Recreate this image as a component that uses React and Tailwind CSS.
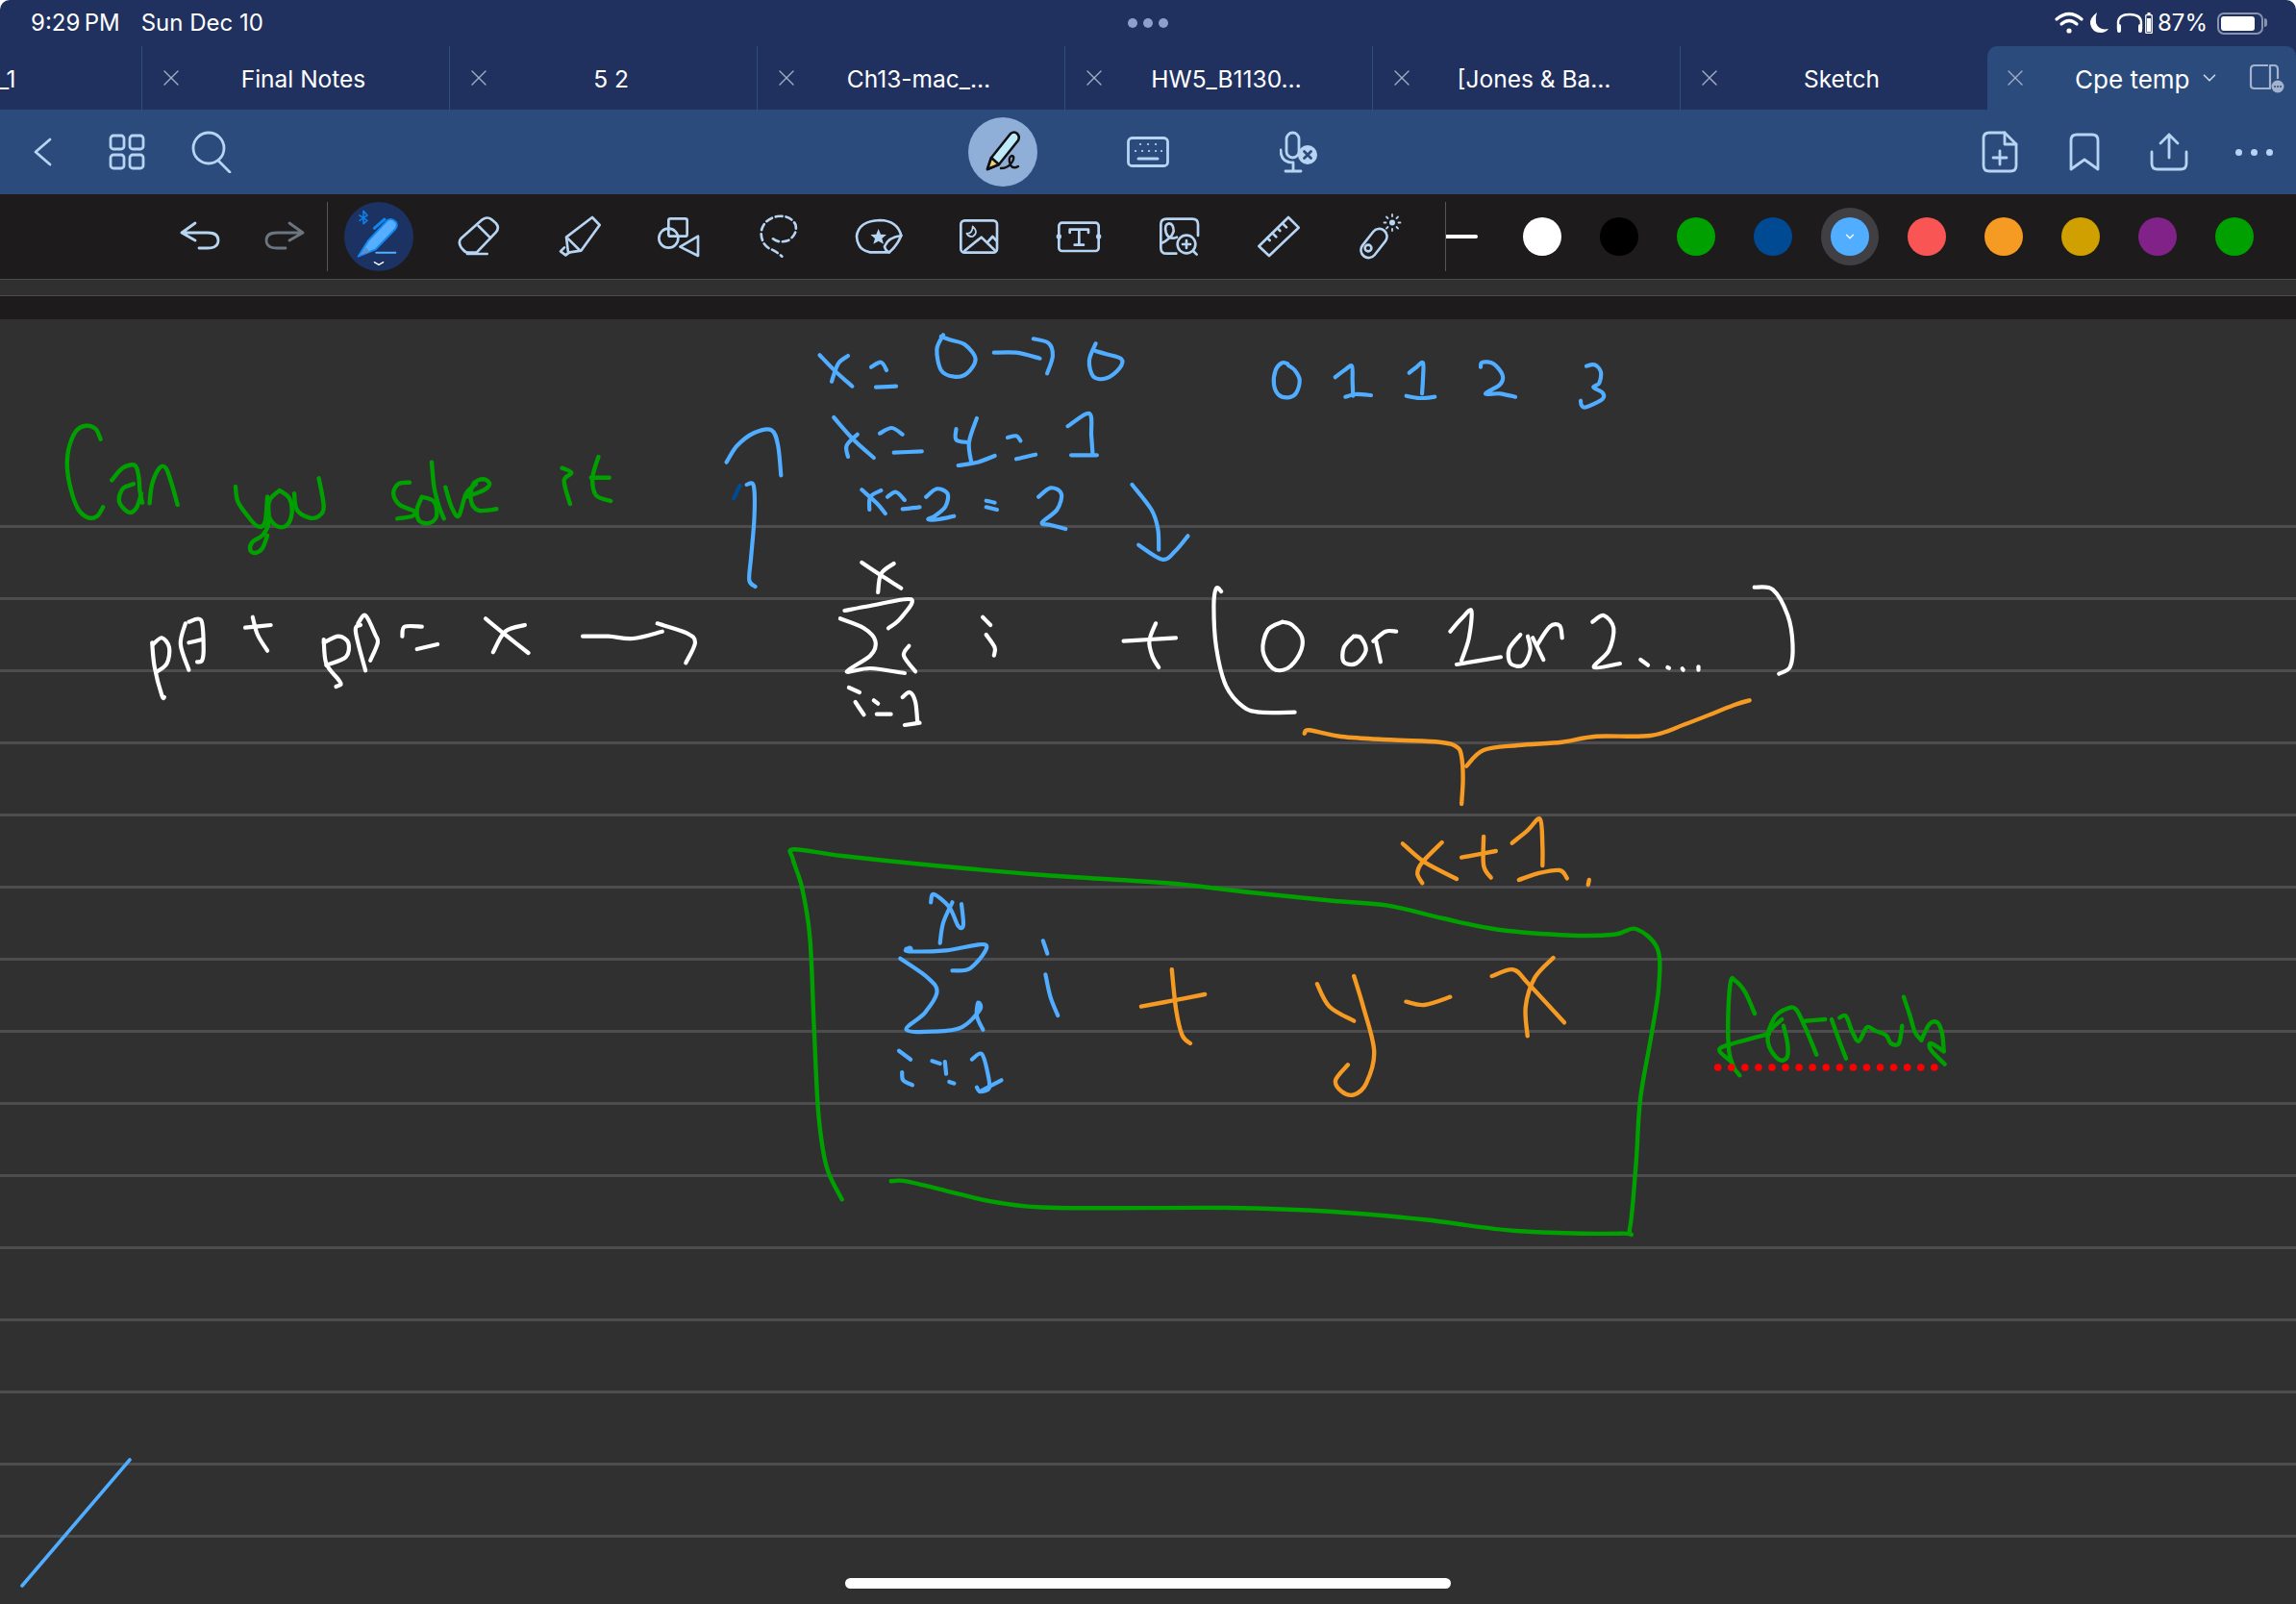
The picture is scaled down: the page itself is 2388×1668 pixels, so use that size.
import { X, ChevronDown } from 'lucide-react';

const ICON = '#b7d4f3';

// ---- handwriting on the page, traced stroke by stroke ----
const GREEN = '#00a000';
const BLUE = '#51adff';
const WHITE = '#ffffff';
const ORANGE = '#f59a23';

// each frame maps traced coordinates to page pixels: [x0, y0, sx, sy]
const INK = [
  {
    frame: [0, 340, 1 / 1.96, 1 / 3],
    strokes: [
      [GREEN, '205,350 195,318 175,308 155,325 140,380 137,440 145,510 160,570 180,595 198,590 210,562'],
      [GREEN, '228,478 250,440 275,432 283,470 285,510 290,548'],
      [GREEN, '272,490 250,505 243,545 262,578 278,565 288,520'],
      [GREEN, '305,550 310,490 325,440 338,440 350,490 362,555'],
      [GREEN, '480,498 485,545 505,590 525,622 540,610 545,530'],
      [GREEN, '545,530 548,610 535,650 515,670 510,695 520,705 535,690 545,650'],
      [GREEN, '570,510 550,540 548,590 565,622 585,618 595,580 590,535 570,510'],
      [GREEN, '600,520 605,570 630,595 650,590 660,560 650,472'],
      [GREEN, '835,485 812,490 802,520 815,555 845,575 840,590 810,598'],
      [GREEN, '860,530 850,570 855,605 875,612 890,590 885,545 860,530'],
      [GREEN, '880,422 885,500 895,560 905,598'],
      [GREEN, '908,500 920,560 935,590 950,520 970,490'],
      [GREEN, '950,530 985,510 998,490 985,475 965,490 960,540 975,572 1012,568'],
      [GREEN, '1146,440 1165,455 1150,480 1162,552'],
      [GREEN, '1220,405 1208,470 1215,525 1245,543'],
      [GREEN, '1205,470 1242,470'],
      [WHITE, '310,985 315,1060 330,1150 335,1155'],
      [WHITE, '312,990 330,970 345,1000 340,1050 318,1078'],
      [WHITE, '378,925 368,990 385,1070'],
      [WHITE, '385,920 410,915 415,1000 412,1040 402,1045'],
      [WHITE, '385,985 412,975'],
      [WHITE, '515,905 525,960 545,1010'],
      [WHITE, '500,938 552,930'],
      [WHITE, '660,975 665,1050 690,1100 695,1115 685,1122'],
      [WHITE, '660,985 690,965 710,985 705,1030 665,1055'],
      [WHITE, '735,930 725,950 745,1072'],
      [WHITE, '730,925 745,900 765,960 770,985 755,1040'],
      [WHITE, '820,965 825,935 860,935'],
      [WHITE, '850,1005 892,990'],
      [WHITE, '990,910 1030,960 1077,1017'],
      [WHITE, '1070,930 1030,950 1005,1015'],
      [WHITE, '1188,965 1240,965 1290,972 1350,950'],
      [WHITE, '1340,925 1400,955 1417,985 1398,1048'],
    ],
  },
  {
    frame: [740, 320, 1 / 2.24, 1 / 3],
    strokes: [
      [BLUE, '252,148 290,200 328,245'],
      [BLUE, '318,150 295,175 280,230'],
      [BLUE, '372,185 395,170 408,195'],
      [BLUE, '383,248 430,245'],
      [BLUE, '540,85 525,130 535,195 565,215 595,205 615,160 590,115 555,100 535,90'],
      [BLUE, '658,140 710,140 765,158'],
      [BLUE, '750,97 785,110 795,150 782,205'],
      [BLUE, '895,112 880,165 890,215 920,220 950,190 955,160 920,145 895,135'],
      [BLUE, '285,342 330,410 378,468'],
      [BLUE, '340,395 315,430 318,465'],
      [BLUE, '392,392 420,375 445,395'],
      [BLUE, '425,452 490,448'],
      [BLUE, '570,378 570,412 598,420'],
      [BLUE, '618,345 600,420 605,480'],
      [BLUE, '575,492 620,482 660,462'],
      [BLUE, '690,405 710,400 720,415'],
      [BLUE, '710,472 755,458'],
      [BLUE, '830,370 880,330 885,400 888,455'],
      [BLUE, '838,460 898,460'],
      [BLUE, '350,568 385,610 405,642'],
      [BLUE, '395,570 370,590 368,630'],
      [BLUE, '410,590 430,575 450,600'],
      [BLUE, '445,628 485,622'],
      [BLUE, '500,590 525,565 550,580 545,620 520,650 505,660 530,660 565,650'],
      [BLUE, '640,602 660,608'],
      [BLUE, '640,622 665,630'],
      [BLUE, '762,590 790,562 815,580 805,630 770,670 790,678 825,690'],
      [BLUE, '980,552 1025,630 1040,690 1042,755'],
      [BLUE, '995,740 1050,785 1080,760 1110,712'],
      [BLUE, '35,482 60,430 100,390 140,382 155,430 162,523'],
      [BLUE, '82,552 98,555 100,650 92,780 88,850 102,870'],
      ['#004b90', '52,595 66,555'],
      [WHITE, '350,795 395,835 442,875'],
      [WHITE, '425,798 395,830 388,888'],
      [WHITE, '310,945 370,930 465,910 440,970 412,1000'],
      [WHITE, '300,970 355,1000 382,1040 370,1085 315,1135 370,1125 450,1140'],
      [WHITE, '460,1055 448,1085 475,1135'],
      [WHITE, '632,965 650,990'],
      [WHITE, '640,1020 660,1060 658,1085'],
      [WHITE, '960,1040 1020,1035 1082,1030'],
      [WHITE, '1035,985 1020,1040 1028,1090 1042,1122'],
      [WHITE, '320,1185 345,1200'],
      [WHITE, '335,1230 355,1270'],
      [WHITE, '378,1225 388,1235'],
      [WHITE, '385,1268 418,1268'],
      [WHITE, '445,1215 462,1200 475,1230 480,1295'],
      [WHITE, '450,1302 485,1295'],
    ],
  },
  {
    frame: [1140, 580, 1 / 1.96, 1 / 3],
    strokes: [
      [WHITE, '255,105 245,95 240,150 245,280 265,400 300,465 335,482 405,482'],
      [WHITE, '380,200 350,225 340,290 360,345 390,345 415,300 420,250 400,210 380,200'],
      [WHITE, '525,245 505,280 505,325 530,330 550,290 540,250 525,245'],
      [WHITE, '570,255 580,325'],
      [WHITE, '565,260 590,230 612,230'],
      [WHITE, '722,230 745,190 765,165 760,250 745,320'],
      [WHITE, '735,333 825,310'],
      [WHITE, '865,240 842,285 845,330 870,335 885,290 880,245'],
      [WHITE, '890,250 912,318'],
      [WHITE, '900,270 925,215 945,212 950,250'],
      [WHITE, '1012,200 1035,180 1055,220 1045,290 1015,342 1068,330'],
      [WHITE, '1110,318 1125,335'],
      [WHITE, '1165,342 1168,344'],
      [WHITE, '1195,346 1197,350'],
      [WHITE, '1228,340 1228,350'],
      [WHITE, '1342,92 1380,100 1410,180 1420,270 1415,340 1392,362'],
      [ORANGE, '425,548 435,538 500,558 600,568 700,575 735,590 745,620 748,690 745,768'],
      [ORANGE, '1332,445 1300,460 1200,520 1130,555 1020,557 950,575 860,585 790,600 755,650'],
      [ORANGE, '625,892 670,950 735,1002'],
      [ORANGE, '705,888 665,950 655,985 665,1015'],
      [ORANGE, '745,935 815,915'],
      [ORANGE, '790,870 790,960 805,998'],
      [ORANGE, '848,890 880,850 905,815 910,900 910,960'],
      [ORANGE, '862,1005 900,985 945,975 960,1000'],
      [ORANGE, '1005,1005 1003,1020'],
    ],
  },
  {
    frame: [780, 860, 1 / 1.568, 1 / 3],
    strokes: [
      [GREEN, '150,1162 125,1060 112,900 105,650 98,350 85,190 70,100 72,70 150,90 300,120 480,150 680,175 820,205 950,230 1040,245 1130,285 1220,320 1340,338 1410,335 1445,318 1480,380 1482,500 1470,650 1452,850 1445,1050 1435,1250 1420,1268 1250,1260 1100,1225 950,1200 780,1188 500,1188 400,1170 320,1135 255,1105 230,1105'],
      [BLUE, '295,235 300,210 325,250 340,310 348,305 345,240'],
      [BLUE, '330,235 315,300 310,362'],
      [BLUE, '255,380 260,388 320,385 385,368 360,440 330,448'],
      [BLUE, '245,410 290,470 305,515 285,580 255,632 300,638 345,625 375,570 372,548 370,590 380,632'],
      [BLUE, '478,355 485,395'],
      [BLUE, '482,460 490,530 502,588'],
      [BLUE, '243,698 262,725'],
      [BLUE, '248,765 250,790 265,805'],
      [BLUE, '297,730 310,738'],
      [BLUE, '318,732 320,770'],
      [BLUE, '325,795 333,800'],
      [BLUE, '362,725 378,708 388,770 390,815 375,825 370,812'],
      [BLUE, '375,825 410,790'],
      [ORANGE, '638,560 680,545 742,522'],
      [ORANGE, '688,445 695,570 705,650 718,675'],
      [ORANGE, '925,490 945,560 985,605'],
      [ORANGE, '985,465 1000,560 1018,700 1005,800 985,835 965,825 955,790 975,742'],
      [ORANGE, '1070,545 1100,555 1142,530'],
      [ORANGE, '1210,465 1245,445 1270,490 1328,610'],
      [ORANGE, '1310,408 1280,470 1265,560 1268,652'],
    ],
  },
  {
    frame: [1700, 960, 1 / 3, 1 / 3],
    strokes: [
      [GREEN, '375,282 345,215 315,180 300,182 292,300 295,400 310,450 328,475'],
      [GREEN, '420,345 292,380 265,398 300,430'],
      [GREEN, '415,345 440,290 480,265 505,270 530,320 568,410'],
      [GREEN, '530,305 595,300'],
      [GREEN, '460,300 420,340 420,385 450,425 475,420 478,380 465,320'],
      [GREEN, '615,300 640,370 660,422'],
      [GREEN, '640,295 660,290 680,340 700,368 725,325 750,335 785,350 800,375 825,375 835,320'],
      [GREEN, '840,230 860,290 875,340 895,365'],
      [GREEN, '895,365 920,315 945,310 960,345 965,400'],
      [GREEN, '965,400 925,375 925,395 968,440'],
    ],
  },
  {
    frame: [1300, 350, 1 / 3, 1 / 3],
    strokes: [
      [BLUE, '118,85 100,82 80,105 75,150 90,182 120,190 145,175 155,135 140,105 120,90'],
      [BLUE, '266,127 295,105 318,92 320,140 322,185'],
      [BLUE, '298,188 330,180 378,183'],
      [BLUE, '497,113 520,95 540,82 540,130 537,178'],
      [BLUE, '488,185 530,192 577,188'],
      [BLUE, '720,95 725,80 760,85 788,120 780,150 735,178 780,178 828,188'],
      [BLUE, '1050,92 1075,88 1095,110 1090,145 1072,158 1100,175 1100,195 1050,220 1035,215 1032,200'],
    ],
  },
];

// catmull-rom through the traced points
function toPath(pts, [x0, y0, sx, sy]) {
  const p = pts.split(' ').map((s) => {
    const [x, y] = s.split(',').map(Number);
    return [x0 + x * sx, y0 + y * sy];
  });
  let d = `M${p[0][0].toFixed(1)} ${p[0][1].toFixed(1)}`;
  for (let i = 0; i < p.length - 1; i++) {
    const a = p[i - 1] || p[i];
    const b = p[i];
    const c = p[i + 1];
    const e = p[i + 2] || c;
    const c1 = [b[0] + (c[0] - a[0]) / 6, b[1] + (c[1] - a[1]) / 6];
    const c2 = [c[0] - (e[0] - b[0]) / 6, c[1] - (e[1] - b[1]) / 6];
    d += `C${c1[0].toFixed(1)} ${c1[1].toFixed(1)} ${c2[0].toFixed(1)} ${c2[1].toFixed(1)} ${c[0].toFixed(1)} ${c[1].toFixed(1)}`;
  }
  return d;
}

function InkLayer() {
  const dots = Array.from({ length: 17 }, (_, i) => 1786.7 + i * 14.07);
  return (
    <svg className="absolute inset-0 w-full h-full" viewBox="0 332 2388 1336" fill="none" strokeLinecap="round" strokeLinejoin="round">
      {INK.map((group, g) =>
        group.strokes.map(([color, pts], i) => (
          <path key={`${g}-${i}`} d={toPath(pts, group.frame)} stroke={color} strokeWidth={color === GREEN || color === ORANGE ? 4.4 : 4.2} />
        ))
      )}
      <circle cx="946" cy="987" r="3.5" fill={BLUE} />
      <path d="M23 1649 L135 1518" stroke={BLUE} strokeWidth="3.6" />
      {dots.map((x) => (
        <circle key={x} cx={x} cy="1110" r="3.8" fill="#ff0000" />
      ))}
    </svg>
  );
}

// ---- tool icons: all drawn in a 3x space, shown at 52px ----
function Tool({ box, children }) {
  return (
    <svg width="52" height="52" viewBox={box} fill="none" stroke={ICON} strokeWidth="8" strokeLinecap="round" strokeLinejoin="round" className="overflow-visible">
      {children}
    </svg>
  );
}

const TOOLS = [
  <Tool box="366 60 156 156" key="eraser">
    <path d="M389 143 L455 85 Q470 74 484 85 L497 96 Q510 110 497 125 L437 188 H412 Q402 188 394 178 L389 172 Q378 155 389 143 Z" />
    <path d="M443 105 L480 142" />
    <path d="M408 192 H470" />
  </Tool>,
  <Tool box="675 60 156 156" key="highlighter">
    <path d="M714 140 L795 78 L818 102 L760 182 L720 188 Z" />
    <path d="M720 145 L755 180" />
    <path d="M708 172 L696 184 L712 196 L724 187" />
  </Tool>,
  <Tool box="990 60 156 156" key="shapes">
    <rect x="1036" y="82" width="58" height="55" rx="6" />
    <circle cx="1036" cy="143" r="30" />
    <path d="M1072 170 L1128 137 V198 Z" />
  </Tool>,
  <Tool box="1302 60 156 156" key="lasso">
    <path d="M1362 145 Q1380 160 1410 150 Q1440 130 1432 100 Q1415 70 1375 75 Q1330 85 1325 125 Q1325 160 1350 175 Q1370 182 1390 200" strokeDasharray="20 12" />
  </Tool>,
  <Tool box="54 60 156 156" key="sticker">
    <path d="M150 187 H105 Q65 180 63 137 Q68 90 135 87 Q190 88 202 135 Q190 165 165 187 Z" />
    <path d="M150 170 Q155 185 165 187 M150 170 Q160 140 202 135" />
    <path d="M131 114 L138 131 L156 132 L142 144 L147 161 L131 152 L115 161 L120 144 L106 132 L124 131 Z" fill={ICON} stroke="none" />
  </Tool>,
  <Tool box="366 60 156 156" key="image">
    <rect x="388" y="88" width="113" height="100" rx="12" />
    <path d="M400 182 L452 140 L495 182 M470 157 L487 138 L500 152" />
    <path d="M425 106 Q445 125 425 138 Q412 140 406 128 Q425 130 425 106 Z" strokeWidth="5" />
  </Tool>,
  <Tool box="678 60 156 156" key="text">
    <rect x="694" y="95" width="124" height="88" rx="10" />
    <circle cx="694" cy="138" r="8" fill={ICON} stroke="none" />
    <circle cx="818" cy="138" r="8" fill={ICON} stroke="none" />
    <path d="M728 126 V116 H786 V126 M757 116 V164 M743 164 H771" />
  </Tool>,
  <Tool box="990 60 156 156" key="zoom">
    <path d="M1060 191 H1030 Q1012 191 1012 173 V100 Q1012 83 1030 83 H1110 Q1128 83 1128 100 V135" />
    <path d="M1012 160 Q1045 145 1052 122 Q1052 97 1037 97 Q1022 100 1028 125 Q1035 150 1062 140" />
    <circle cx="1092" cy="162" r="28" />
    <path d="M1113 183 L1124 194" />
    <path d="M1080 162 H1104 M1092 150 V174" />
  </Tool>,
  <Tool box="1302 60 156 156" key="ruler">
    <path d="M1410 78 L1442 110 L1350 198 L1318 168 Z" />
    <path d="M1392 97 L1404 109 M1376 112 L1384 120 M1360 127 L1372 139 M1344 142 L1352 150" />
  </Tool>,
];

function LaserIcon() {
  return (
    <svg width="52" height="52" viewBox="0 0 52 52" fill="none" stroke={ICON} strokeWidth="2.6" strokeLinecap="round" className="overflow-visible">
      <rect x="4" y="25" width="34" height="16" rx="8" transform="rotate(-52 21 33)" />
      <circle cx="15" cy="38" r="3.4" />
      <circle cx="40" cy="11.5" r="3" fill={ICON} stroke="none" />
      <path d="M40 3 V5 M40 18 V20 M31.5 11.5 H33.5 M46.5 11.5 H48.5 M34 5.5 L35.5 7 M44.5 16 L46 17.5 M46 5.5 L44.5 7 M35.5 16 L34 17.5" strokeWidth="1.8" />
    </svg>
  );
}

function PenButton() {
  return (
    <div className="w-[72px] h-[72px] rounded-full bg-[#1b3262]">
      <svg width="72" height="72" viewBox="24 30 216 216" fill="none" strokeLinecap="round" strokeLinejoin="round">
        <path d="M98 152 L158 88 Q170 78 185 92 Q192 102 184 114 L122 178 L68 200 Z" fill="#55aeff" stroke="#1486f0" strokeWidth="6" />
        <path d="M118 112 L150 84" stroke="#1486f0" strokeWidth="9" />
        <path d="M72 196 L92 172 L104 186 Z" fill="#5f8fc8" />
        <path d="M72 72 L96 88 L84 98 V58 L96 72 L72 88" stroke="#0f7fe6" strokeWidth="5" />
        <path d="M124 188 H184" stroke="#55aeff" strokeWidth="6" />
        <path d="M118 218 L132 226 L146 218" stroke="#ffffff" strokeWidth="4" />
      </svg>
    </div>
  );
}

function UndoIcon({ flip }) {
  return (
    <svg width="52" height="52" viewBox="0 0 52 52" fill="none" stroke={flip ? '#6c7681' : ICON} strokeWidth="2.8" strokeLinecap="round" strokeLinejoin="round" className={flip ? '-scale-x-100' : ''}>
      <path d="M21 12 L7 22 L21 30 M7 22 H34 Q45 22 45 30 Q45 38 34 38 H25" />
    </svg>
  );
}

// ---- top bar icons ----
function Glyph({ w = 44, h = 44, children }) {
  return (
    <svg width={w} height={h} viewBox={`0 0 ${w} ${h}`} fill="none" stroke={ICON} strokeWidth="2.8" strokeLinecap="round" strokeLinejoin="round">
      {children}
    </svg>
  );
}

function PencilMode() {
  return (
    <div className="w-[72px] h-[72px] rounded-full bg-[#8fafd9] flex items-center justify-center">
      <svg width="48" height="48" viewBox="0 0 48 48" fill="none" stroke="#111111" strokeWidth="2.6" strokeLinecap="round" strokeLinejoin="round">
        <path d="M12 30 L32 5 Q36 2 39 5 Q42 8 40 12 L20 37 L8 42 Z" fill="#bdebfa" />
        <path d="M12 30 L20 37 L8 42 Z" fill="#f0d27a" />
        <path d="M22 41 Q30 41 34 34 Q37 28 33 28 Q29 30 32 38 Q35 42 40 39" strokeWidth="2.4" />
      </svg>
    </div>
  );
}

function StatusIcons() {
  return (
    <div className="flex items-center pr-[34px]">
      <svg width="30" height="24" viewBox="0 0 30 24" fill="none" stroke="#ffffff" strokeWidth="3.2" strokeLinecap="round" className="mr-[6px]">
        <path d="M2 8 Q15 -3 28 8" />
        <path d="M7 13 Q15 6 23 13" />
        <circle cx="15" cy="20" r="2.6" fill="#ffffff" stroke="none" />
      </svg>
      <svg width="20" height="22" viewBox="0 0 20 22" className="mr-[8px]">
        <path d="M8 0 Q0 6 1 12 Q3 21 12 21 Q17 21 20 17 Q10 19 7 11 Q6 5 8 0 Z" fill="#ffffff" />
      </svg>
      <svg width="28" height="22" viewBox="0 0 28 22" fill="none" stroke="#ffffff" strokeWidth="2.4" strokeLinecap="round" className="mr-[2px]">
        <path d="M2 17 V11 Q2 2 14 2 Q26 2 26 11 V17" />
        <rect x="1" y="12" width="4" height="9" rx="2" fill="#ffffff" stroke="none" />
        <rect x="23" y="12" width="4" height="9" rx="2" fill="#ffffff" stroke="none" />
      </svg>
      <svg width="8" height="22" viewBox="0 0 8 22" className="mr-[5px]">
        <rect x="2.5" y="0" width="3" height="2" fill="#ffffff" />
        <rect x="0.75" y="2.5" width="6.5" height="19" rx="1" fill="none" stroke="#ffffff" strokeWidth="1.3" />
        <rect x="2" y="6" width="4" height="14" fill="#ffffff" />
      </svg>
      <span className="text-[24px] leading-none text-white mr-[10px]">87%</span>
      <div className="relative w-[48px] h-[23px] rounded-[7px] border-2 border-[#8893ae] p-[2px]">
        <div className="h-full w-[35px] rounded-[3px] bg-white" />
        <div className="absolute -right-[6px] top-[4px] w-[3px] h-[9px] rounded-r-full bg-[#8893ae]" />
      </div>
    </div>
  );
}

const TABS = ['Final Notes', '5 2', 'Ch13-mac_…', 'HW5_B1130…', '[Jones & Ba…', 'Sketch'];
const COLORS = ['bg-white', 'bg-black', 'bg-[#00a000]', 'bg-[#004a93]', 'SELECTED', 'bg-[#fa5555]', 'bg-[#f59a23]', 'bg-[#cfa000]', 'bg-[#802288]', 'bg-[#00a000]'];
const LINES = Array.from({ length: 15 }, (_, i) => i);

function App() {
  return (
    <div className="w-[2388px] h-[1668px] bg-white overflow-hidden [font-family:Inter,sans-serif]">
      <div className="flex flex-col h-full rounded-t-[10px] overflow-hidden">
        {/* status bar + tabs */}
        <div className="bg-[#20315f] shrink-0">
          <div className="h-[48px] grid grid-cols-3 items-center">
            <div className="pl-[32px] flex gap-[22px] text-[24px] leading-none text-white">
              <span>9:29{'\u2009'}PM</span>
              <span>Sun Dec 10</span>
            </div>
            <div className="flex justify-center gap-[6px]">
              <div className="w-[10px] h-[10px] rounded-full bg-[#8e9fcc]" />
              <div className="w-[10px] h-[10px] rounded-full bg-[#8e9fcc]" />
              <div className="w-[10px] h-[10px] rounded-full bg-[#8e9fcc]" />
            </div>
            <div className="flex justify-end">
              <StatusIcons />
            </div>
          </div>
          <div className="h-[66px] flex text-[24.5px] text-white">
            <div className="w-[147px] flex items-center overflow-hidden pt-[2px]">
              <span className="-ml-[2px]">_1</span>
            </div>
            {TABS.map((name) => (
              <div key={name} className="relative w-[320px] flex items-center justify-center pl-[60px] pr-[44px] pt-[2px] border-l border-[#304c79]">
                <X className="absolute left-[16px] top-[19px] w-[28px] h-[28px] text-[#a3adc4]" strokeWidth={1.2} />
                <span className="whitespace-nowrap">{name}</span>
              </div>
            ))}
            <div className="relative flex-1 flex items-center bg-[#2a4b7c] rounded-t-[10px] pl-[91px] text-[26px]">
              <X className="absolute left-[15px] top-[19px] w-[28px] h-[28px] text-[#a3adc4]" strokeWidth={1.2} />
              <span className="whitespace-nowrap pt-[2px]">Cpe temp</span>
              <ChevronDown className="ml-[9px] w-[22px] h-[22px] text-[#c8d6ea]" strokeWidth={1.8} />
              <svg width="38" height="28" viewBox="0 0 38 28" fill="none" className="ml-[30px] overflow-visible">
                <path d="M20 1 H6 Q2 1 2 5 V22 Q2 25 6 25 H22 V1 H26 Q30 1 30 5 V15" stroke="#a3b3ce" strokeWidth="2.2" strokeLinejoin="round" />
                <circle cx="30" cy="23" r="6.5" fill="#a3b3ce" />
                <path d="M27 23 H27.1 M30 23 H30.1 M33 23 H33.1" stroke="#2a4b7c" strokeWidth="1.8" strokeLinecap="round" />
              </svg>
            </div>
          </div>
        </div>

        {/* document toolbar */}
        <div className="h-[88px] shrink-0 bg-[#2a4b7c] flex items-center">
          <div className="w-[1007px] flex items-center">
            <div className="w-[88px] flex justify-center">
              <Glyph w={20} h={30}>
                <path d="M18 2 L3 15 L18 28" />
              </Glyph>
            </div>
            <div className="w-[88px] flex justify-center">
              <Glyph w={38} h={38}>
                <rect x="2" y="2" width="14" height="14" rx="3" />
                <rect x="22" y="2" width="14" height="14" rx="3" />
                <rect x="2" y="22" width="14" height="14" rx="3" />
                <rect x="22" y="22" width="14" height="14" rx="3" />
              </Glyph>
            </div>
            <div className="w-[88px] flex justify-center">
              <Glyph w={42} h={44}>
                <circle cx="18" cy="18" r="16" />
                <path d="M28 31 L40 43" />
              </Glyph>
            </div>
          </div>
          <PencilMode />
          <div className="ml-[93px]">
            <Glyph w={44} h={32}>
              <rect x="1.5" y="1.5" width="41" height="29" rx="4" />
              <path d="M14 8 H14.1 M22 8 H22.1 M30 8 H30.1 M9 15 H9.1 M16 15 H16.1 M23 15 H23.1 M30 15 H30.1 M36 15 H36.1" strokeWidth="2.2" />
              <path d="M12 23 H32" strokeWidth="3" />
            </Glyph>
          </div>
          <div className="ml-[115px]">
            <Glyph w={42} h={44}>
              <rect x="7" y="2" width="13" height="26" rx="6.5" />
              <path d="M1 20 Q1 33 14 33 M14 33 V41 M6 42 H22" />
              <circle cx="29" cy="25" r="10" fill={ICON} stroke="none" />
              <path d="M25.5 21.5 L32.5 28.5 M32.5 21.5 L25.5 28.5" stroke="#2a4b7c" />
            </Glyph>
          </div>
          <div className="ml-auto flex items-center">
            <div className="w-[88px] flex justify-center">
              <Glyph w={38} h={44}>
                <path d="M24 2 H8 Q2 2 2 8 V36 Q2 42 8 42 H30 Q36 42 36 36 V14 Z" />
                <path d="M24 2 V14 H36" />
                <path d="M12 28 H26 M19 21 V35" />
              </Glyph>
            </div>
            <div className="w-[88px] flex justify-center">
              <Glyph w={32} h={40}>
                <path d="M2 38 V8 Q2 2 8 2 H24 Q30 2 30 8 V38 L16 28 Z" />
              </Glyph>
            </div>
            <div className="w-[88px] flex justify-center">
              <Glyph w={40} h={40}>
                <path d="M20 26 V2 M11 11 L20 2 L29 11" />
                <path d="M2 20 V32 Q2 38 8 38 H32 Q38 38 38 32 V20" />
              </Glyph>
            </div>
            <div className="w-[88px] flex justify-center gap-[9px]">
              <div className="w-[7px] h-[7px] rounded-full bg-[#b7d4f3]" />
              <div className="w-[7px] h-[7px] rounded-full bg-[#b7d4f3]" />
              <div className="w-[7px] h-[7px] rounded-full bg-[#b7d4f3]" />
            </div>
          </div>
        </div>

        {/* drawing toolbar */}
        <div className="h-[88px] shrink-0 bg-[#1d1b1b] flex items-center pl-[164px]">
          <div className="w-[88px] flex justify-center">
            <UndoIcon />
          </div>
          <div className="w-[88px] flex justify-center">
            <UndoIcon flip />
          </div>
          <div className="w-[1px] h-[72px] bg-[#55565a]" />
          <div className="w-[105px] flex justify-center">
            <PenButton />
          </div>
          {TOOLS.map((tool, i) => (
            <div key={i} className="w-[104px] flex justify-center">
              {tool}
            </div>
          ))}
          <div className="w-[104px] flex justify-center">
            <LaserIcon />
          </div>
          <div className="ml-[17px] w-[1px] h-[72px] bg-[#55565a]" />
          <div className="w-[33px] h-[4px] rounded-r-full bg-white" />
          <div className="ml-[27px] flex">
            {COLORS.map((c, i) =>
              c === 'SELECTED' ? (
                <div key={i} className="w-[80px] flex justify-center">
                  <div className="w-[60px] h-[60px] rounded-full bg-[#404044] flex items-center justify-center">
                    <div className="w-[40px] h-[40px] rounded-full bg-[#51adff] flex items-center justify-center">
                      <ChevronDown className="w-[14px] h-[14px] text-white" strokeWidth={2.4} />
                    </div>
                  </div>
                </div>
              ) : (
                <div key={i} className="w-[80px] h-[60px] flex items-center justify-center">
                  <div className={`w-[40px] h-[40px] rounded-full ${c}`} />
                </div>
              )
            )}
          </div>
        </div>

        {/* page gap */}
        <div className="h-[18px] shrink-0 bg-[#303030] border-y border-[#4c4c4c]" />
        <div className="h-[24px] shrink-0 bg-[#1d1b1b]" />

        {/* page */}
        <div className="relative flex-1 bg-[#303030] overflow-hidden pt-[214px]">
          {LINES.map((i) => (
            <div key={i} className="h-[75px] border-t-[3px] border-[#4d4d50]" />
          ))}
          <InkLayer />
          <div className="absolute left-[879px] bottom-[16px] w-[630px] h-[11px] rounded-full bg-white" />
        </div>
      </div>
    </div>
  );
}

export default App;
